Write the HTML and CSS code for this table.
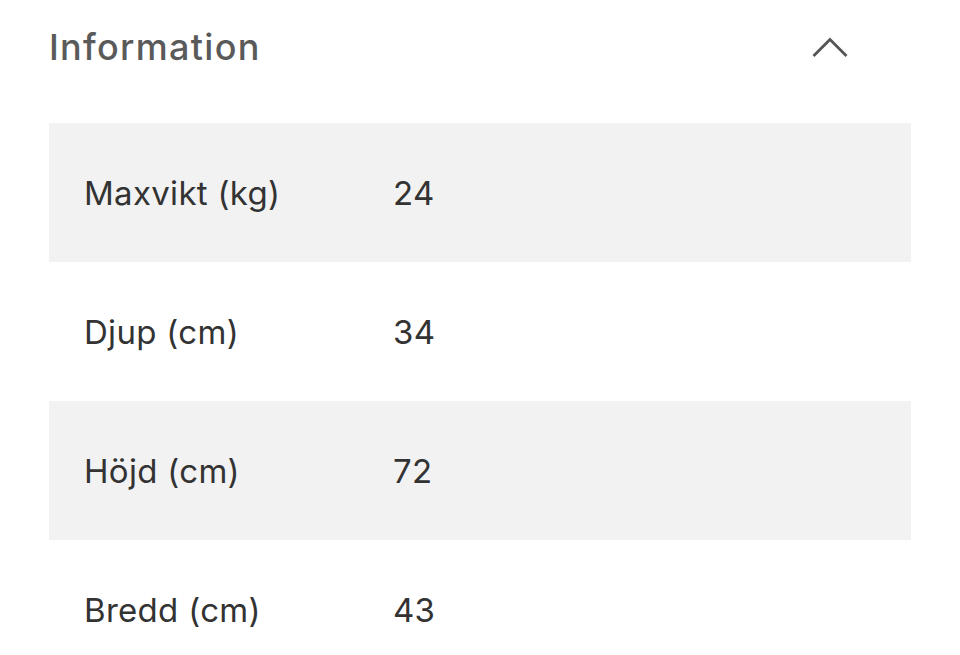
FILE: index.html
```html
<!DOCTYPE html>
<html lang="sv">
<head>
<meta charset="utf-8">
<title>Information</title>
<link rel="stylesheet" href="styles.css">
</head>
<body>
<section class="info">
  <header class="info-head">
    <h2 class="info-title">Information</h2>
    <svg class="chevron" width="36" height="22" viewBox="0 0 36 22" aria-hidden="true">
      <path d="M1.5 20 L18 3.5 L34.5 20" fill="none" stroke="#555" stroke-width="2.8" stroke-linecap="butt" stroke-linejoin="miter"/>
    </svg>
  </header>
  <div class="spec-table">
    <div class="spec-row alt"><span class="spec-label">Maxvikt (kg)</span><span class="spec-value">24</span></div>
    <div class="spec-row"><span class="spec-label">Djup (cm)</span><span class="spec-value">34</span></div>
    <div class="spec-row alt"><span class="spec-label">Höjd (cm)</span><span class="spec-value">72</span></div>
    <div class="spec-row"><span class="spec-label">Bredd (cm)</span><span class="spec-value">43</span></div>
  </div>
</section>
</body>
</html>
```

FILE: styles.css
```css
html, body {
  margin: 0;
  padding: 0;
  background: #fff;
}
body {
  font-family: Inter, "Noto Sans", sans-serif;
  overflow: hidden;
}
.info {
  margin-left: 49px;
  width: 862px;
}
.info-head {
  display: flex;
  align-items: center;
  justify-content: space-between;
  height: 93px;
  padding-right: 63px;
  margin-bottom: 30px;
}
.info-title {
  margin: 0;
  font-size: 36px;
  font-weight: 500;
  color: #5a5a5a;
  letter-spacing: 1.3px;
}
.chevron {
  display: block;
}
.spec-table {
  display: flex;
  flex-direction: column;
}
.spec-row {
  display: flex;
  align-items: center;
  height: 139px;
  padding-left: 35px;
  font-size: 33px;
  color: #333;
  letter-spacing: 0.3px;
}
.spec-row.alt {
  background: #f2f2f2;
}
.spec-label {
  width: 309px;
}
```
